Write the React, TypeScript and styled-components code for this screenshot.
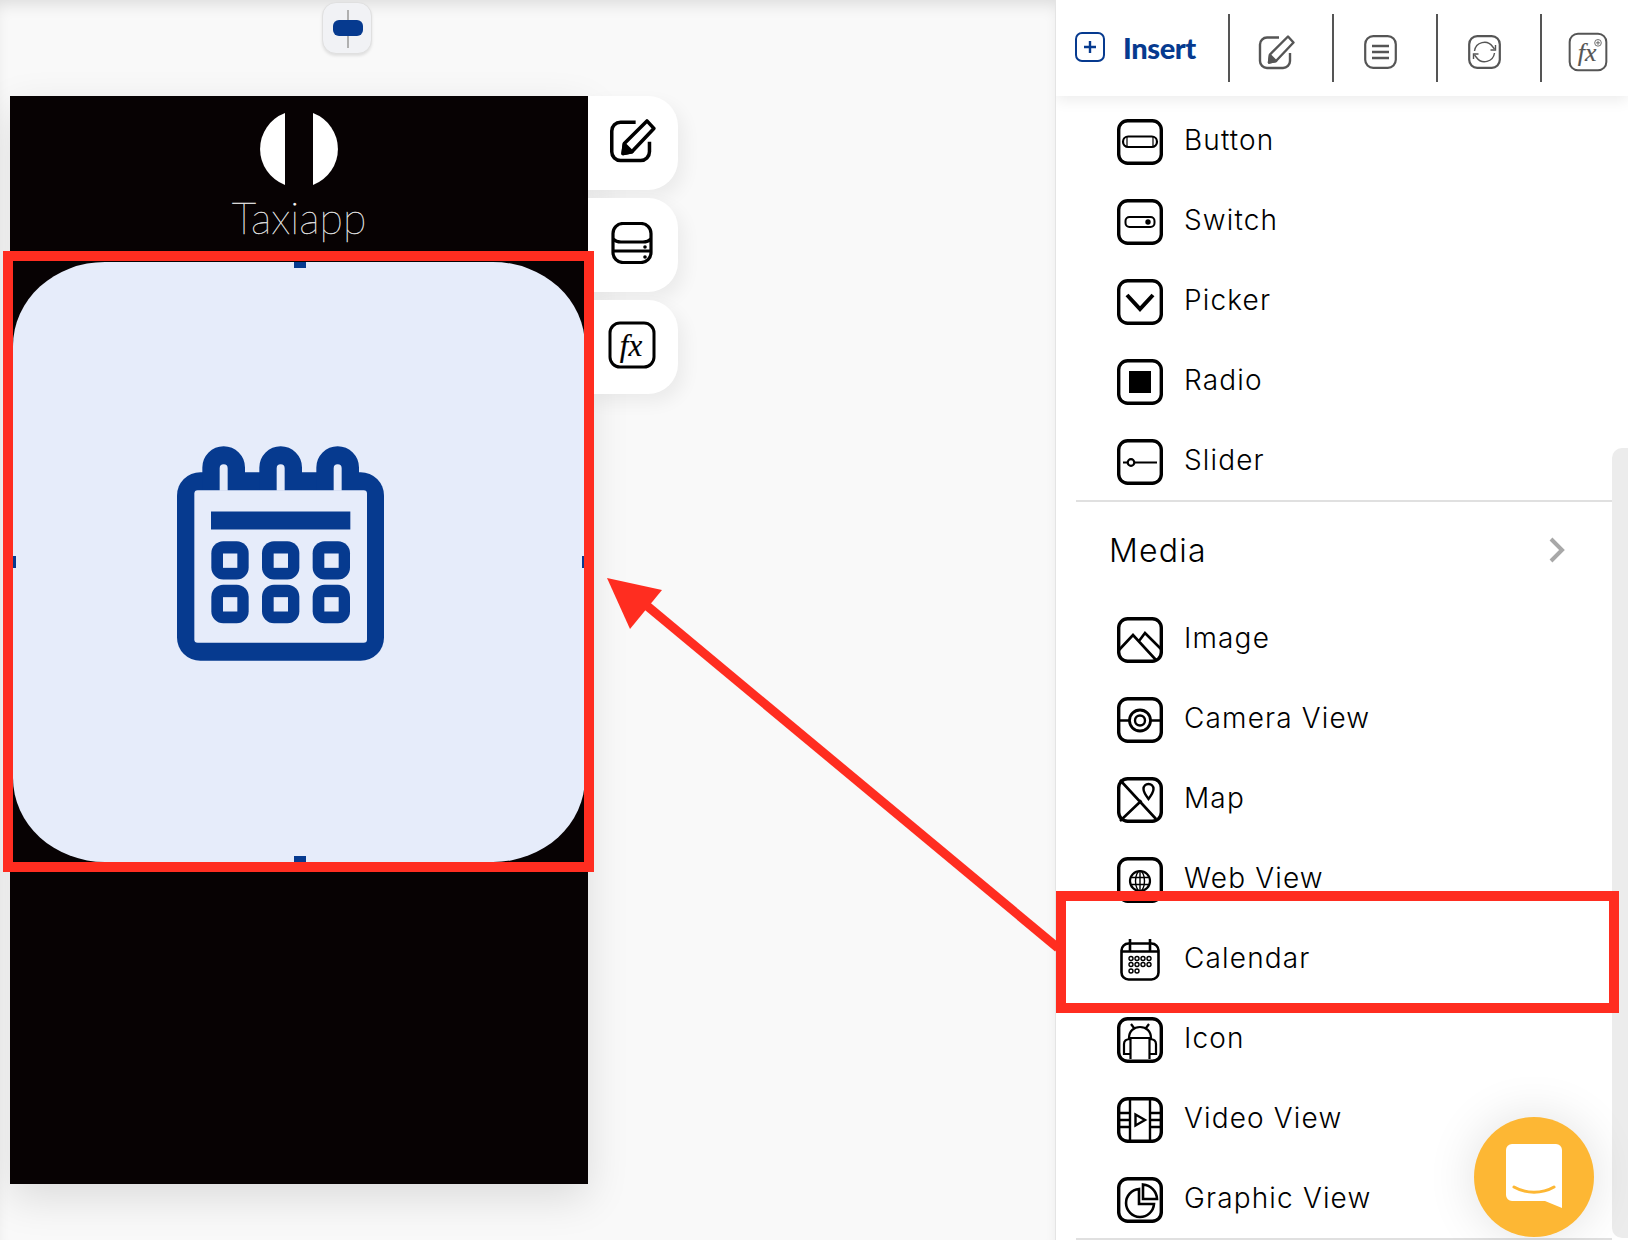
import React from 'react'
import styled, { createGlobalStyle } from 'styled-components'

const BLUE = '#063a8f'
const CARD = '#e6ecfa'
const RED = '#ff2d20'

const Global = createGlobalStyle`
  html, body { margin: 0; padding: 0; background: #f9f9f9; }
  body { font-family: Inter, "Liberation Sans", sans-serif; }
`

const Page = styled.div`
  position: relative;
  width: 1628px;
  height: 1240px;
  overflow: hidden;
  display: flex;
`
const Canvas = styled.div`
  width: 1055px;
  flex: none;
  display: flex;
  flex-direction: column;
  padding: 2px 0 0 10px;
  box-sizing: border-box;
  background: #f9f9f9;
  box-shadow: inset 0 10px 16px -6px rgba(0, 0, 0, 0.12);
`
const AlignBox = styled.div`
  width: 50px;
  height: 52px;
  margin: 0 0 42px 312px;
  box-sizing: border-box;
  position: relative;
  display: flex;
  align-items: center;
  justify-content: center;
  background: #f1f2f5;
  border: 1px solid #e0e0e0;
  border-radius: 14px;
  box-shadow: 0 2px 3px rgba(0, 0, 0, 0.1);
`
const AlignLine = styled.div`
  position: absolute;
  left: 24px;
  top: 7px;
  width: 2px;
  height: 38px;
  background: #b0b0b0;
`
const AlignPill = styled.div`
  position: relative;
  width: 30px;
  height: 16px;
  margin-left: 2px;
  border-radius: 6px;
  background: ${BLUE};
`
const Stage = styled.div`
  display: flex;
  align-items: flex-start;
`
const Phone = styled.div`
  width: 578px;
  height: 1088px;
  flex: none;
  background: #070203;
  box-shadow: 0 14px 40px rgba(0, 0, 0, 0.12);
  display: flex;
  flex-direction: column;
  padding: 17px 3px 0 3px;
  box-sizing: border-box;
`
const Brand = styled.div`
  height: 149px;
  display: flex;
  flex-direction: column;
  align-items: center;
  color: #fff;
  font-family: Lato, sans-serif;
  font-weight: 100;
  font-size: 43px;
  line-height: 50px;
  -webkit-text-stroke: 0.35px #e4e4e4;
`
const BrandName = styled.div`
  margin-top: 8px;
`
const Selected = styled.div`
  position: relative;
  height: 600px;
`
const Card = styled.div`
  height: 100%;
  background: ${CARD};
  border-radius: 92px / 84px;
  display: flex;
  align-items: center;
  justify-content: center;
  padding: 0 38px 18px 0;
  box-sizing: border-box;
`
const Handle = styled.div<{ $side: 'top' | 'bottom' | 'left' | 'right' }>`
  position: absolute;
  background: ${BLUE};
  ${p => (p.$side === 'top' || p.$side === 'bottom'
    ? `width: 12px; height: 6px; left: 281px; ${p.$side}: 0;`
    : `width: 4px; height: 12px; top: 294px; ${p.$side}: -1px;`)}
`
const SideRail = styled.div`
  display: flex;
  flex-direction: column;
  gap: 8px;
`
const SideButton = styled.div`
  width: 90px;
  height: 94px;
  display: flex;
  align-items: center;
  justify-content: center;
  padding: 0 2px 4px 0;
  box-sizing: border-box;
  background: #fff;
  border-radius: 0 30px 30px 0;
  box-shadow: 6px 8px 18px rgba(0, 0, 0, 0.06);
`
const Panel = styled.div`
  position: relative;
  flex: 1;
  background: #fff;
  border-left: 1px solid #e4e4e4;
  overflow: hidden;
`
const Toolbar = styled.div`
  position: relative;
  z-index: 2;
  height: 96px;
  display: flex;
  align-items: center;
  background: #fff;
  box-shadow: 0 4px 14px rgba(0, 0, 0, 0.08);
`
const InsertTab = styled.div`
  width: 172px;
  flex: none;
  display: flex;
  align-items: center;
  gap: 18px;
  padding: 0 0 2px 19px;
  box-sizing: border-box;
  height: 96px;
  color: ${BLUE};
  font-family: Lato, sans-serif;
  font-weight: 900;
  font-size: 29px;
  letter-spacing: -0.4px;
`
const ToolSlot = styled.div`
  width: 104px;
  flex: none;
  height: 68px;
  border-left: 2px solid #555;
  box-sizing: border-box;
  display: flex;
  align-items: center;
  justify-content: center;
  padding: 8px 10px 0 0;
`
const List = styled.div`
  display: flex;
  flex-direction: column;
  padding-top: 6px;
`
const Row = styled.div`
  flex: none;
  height: 80px;
  display: flex;
  align-items: center;
  padding-left: 61px;
`
const IconSlot = styled.div`
  width: 46px;
  height: 46px;
  flex: none;
  display: flex;
  align-items: center;
  justify-content: center;
`
const RowLabel = styled.div`
  margin: -5px 0 0 21px;
  font-size: 28px;
  font-weight: 300;
  line-height: 36px;
  letter-spacing: 1.15px;
  color: #000;
`
const Divider = styled.div<{ $pull: number }>`
  position: relative;
  height: 2px;
  margin: ${p => -p.$pull}px 16px 0 20px;
  background: #e0e0e0;
`
const GroupHead = styled.div`
  flex: none;
  display: flex;
  align-items: center;
  justify-content: space-between;
  padding: 0 63px 2px 53px;
  box-sizing: border-box;
  height: 98px;
  font-size: 32px;
  font-weight: 300;
  letter-spacing: 1.2px;
  color: #000;
`
const ScrollTrack = styled.div`
  position: absolute;
  right: 0;
  top: 448px;
  bottom: 2px;
  width: 16px;
  background: #ececec;
  border-radius: 10px 0 0 10px;
`
const Callout = styled.div`
  position: absolute;
  left: 1056px;
  top: 891px;
  width: 563px;
  height: 122px;
  box-sizing: border-box;
  border: 10px solid ${RED};
`
const SelectBox = styled.div`
  position: absolute;
  left: 3px;
  top: 251px;
  width: 591px;
  height: 621px;
  box-sizing: border-box;
  border: 10px solid ${RED};
`
const ArrowLayer = styled.svg`
  position: absolute;
  left: 0;
  top: 0;
  pointer-events: none;
`
const ChatButton = styled.div`
  position: absolute;
  left: 1474px;
  top: 1117px;
  width: 120px;
  height: 120px;
  border-radius: 50%;
  background: #fdb734;
  box-shadow: 0 0 50px rgba(0, 0, 0, 0.12);
  display: flex;
  align-items: center;
  justify-content: center;
  padding-bottom: 3px;
  box-sizing: border-box;
`

// every list icon sits in the same rounded square
const Frame = ({ children }: { children?: React.ReactNode }) => (
  <svg width="46" height="46" viewBox="0 0 46 46" fill="none" stroke="#000" strokeWidth="1.6">
    <rect x="1.7" y="1.7" width="42.6" height="42.6" rx="9" strokeWidth="3.4" />
    {children}
  </svg>
)

const icons: Record<string, React.ReactNode> = {
  Button: (
    <Frame>
      <rect x="6" y="17.5" width="34" height="10.5" rx="5.2" strokeWidth="2.2" />
      <path d="M10 18v10M36 18v10" strokeWidth="1.2" />
    </Frame>
  ),
  Switch: (
    <Frame>
      <rect x="8.5" y="18" width="29" height="10" rx="4" strokeWidth="2" />
      <circle cx="31" cy="23" r="2.7" fill="#000" stroke="none" />
    </Frame>
  ),
  Picker: (
    <Frame>
      <path d="M10 16l13 14 13-14" strokeWidth="4" />
    </Frame>
  ),
  Radio: (
    <Frame>
      <rect x="12" y="12" width="22" height="22" fill="#000" stroke="none" />
    </Frame>
  ),
  Slider: (
    <Frame>
      <circle cx="14" cy="23.5" r="3.3" strokeWidth="2.2" />
      <path d="M6 23.5h4.5M18 23.5h22" strokeWidth="2.2" />
    </Frame>
  ),
  Image: (
    <Frame>
      <path d="M2 33l14-15 23 25M22 24l6-8 16 16" strokeWidth="2.6" />
    </Frame>
  ),
  'Camera View': (
    <Frame>
      <circle cx="23" cy="23.5" r="10.5" strokeWidth="2.8" />
      <circle cx="23" cy="23.5" r="5" strokeWidth="2.4" />
      <path d="M2 23.5h10M34 23.5h10" strokeWidth="2.4" />
    </Frame>
  ),
  Map: (
    <Frame>
      <path d="M3 3l36 39M24.500 23.500L3 44" strokeWidth="2.6" />
      <path d="M31.500 22c-3-4-5-7-5-10a5 5 0 0 1 10 0c0 3-2 6-5 10z" strokeWidth="2.4" />
    </Frame>
  ),
  'Web View': (
    <Frame>
      <circle cx="23" cy="24" r="10" strokeWidth="2.2" />
      <ellipse cx="23" cy="24" rx="4.5" ry="10" strokeWidth="1.4" />
      <path d="M23 14v20M13.500 20.500h19M13.500 27.500h19" strokeWidth="1.4" />
    </Frame>
  ),
  Calendar: (
    <svg width="40" height="42" viewBox="0 0 40 42" fill="none" stroke="#000" strokeWidth="2.6">
      <rect x="1.500" y="4.500" width="37" height="36" rx="7" />
      <path d="M1.500 12.500h37M10 0v12M30 0v12" />
      {[[11, 19.5], [17, 19.5], [23, 19.5], [29, 19.5], [11, 25.5], [17, 25.5], [23, 25.5], [29, 25.5], [11, 32], [17, 32]].map(([x, y]) => (
        <circle key={`${x}-${y}`} cx={x} cy={y} r="2" strokeWidth="1.4" />
      ))}
    </svg>
  ),
  Icon: (
    <Frame>
      <path d="M12 21c0-7 5-11 11-11s11 4 11 11zM14 7l3 4M32 7l-3 4" strokeWidth="2.2" />
      <path d="M13.500 21v21M32.500 21v21M13.500 22c-4 0-6.500 2-6.500 5v10h6.500M32.500 22c4 0 6.500 2 6.500 5v10h-6.500" strokeWidth="2.2" />
    </Frame>
  ),
  'Video View': (
    <Frame>
      <path d="M13 2v42M33 2v42M2 16h11M2 23h11M2 30h11M33 16h11M33 23h11M33 30h11" strokeWidth="2.4" />
      <path d="M18.500 17.500l9.500 5.500-9.500 5.500z" strokeWidth="2.4" />
    </Frame>
  ),
  'Graphic View': (
    <Frame>
      <path d="M22 12a14 14 0 1 0 15 15H22z" strokeWidth="2.6" />
      <path d="M26 7.500v14.500h14a15 15 0 0 0-14-14.500z" strokeWidth="2.6" />
    </Frame>
  ),
}

const EditGlyph = ({ w, h, color, width }: { w: number; h: number; color: string; width: number }) => (
  <svg width={w} height={h} viewBox="0 0 37 35" fill="none" stroke={color} strokeWidth={width} strokeLinejoin="round">
    <path d="M21 2.500H9a7 7 0 0 0-7 7V26a7 7 0 0 0 7 7h16a7 7 0 0 0 7-7V18" />
    <path d="M30 1.500l5.500 6L18 26l-7 1.500 1-8z" />
    <path d="M12 20l6 6-7 1.500z" fill={color} />
  </svg>
)

const FxGlyph = ({ w, h, color, width, plus }: { w: number; h: number; color: string; width: number; plus?: boolean }) => (
  <svg width={w} height={h} viewBox="0 0 48 48" fill="none" stroke={color} strokeWidth={width}>
    <rect x="2" y="2" width="44" height="44" rx="10" />
    <text x="23" y="35" textAnchor="middle" fontFamily="'Liberation Serif', serif" fontStyle="italic" fontSize="31" fill={color} stroke={color} strokeWidth="0.2">
      fx
    </text>
    {plus && <circle cx="36" cy="13" r="4" strokeWidth="1" />}
    {plus && <path d="M36 10.500v5M33.500 13h5" strokeWidth="1" />}
  </svg>
)

const controls = ['Button', 'Switch', 'Picker', 'Radio', 'Slider']
const media = ['Image', 'Camera View', 'Map', 'Web View', 'Calendar', 'Icon', 'Video View', 'Graphic View']

const ItemRow = ({ name }: { name: string }) => (
  <Row>
    <IconSlot>{icons[name]}</IconSlot>
    <RowLabel>{name}</RowLabel>
  </Row>
)

export default function App() {
  return (
    <Page>
      <Global />
      <Canvas>
        <AlignBox>
          <AlignLine />
          <AlignPill />
        </AlignBox>
        <Stage>
          <Phone>
            <Brand>
              <svg width="78" height="72" viewBox="0 0 78 72" fill="#fff">
                <path d="M25 0A39 38.600 0 0 0 25 72z" />
                <path d="M53 0A39 38.600 0 0 1 53 72z" />
              </svg>
              <BrandName>Taxiapp</BrandName>
            </Brand>
            <Selected>
              <Card>
                <svg width="207" height="215" viewBox="82 78 621 644">
                  <rect x="82" y="156" width="621" height="566" rx="70" fill={BLUE} />
                  <path d="M158 210v-68a64 64 0 0 1 128 0v68zM329 210v-68a64 64 0 0 1 128 0v68zM500 210v-68a64 64 0 0 1 128 0v68z" fill={BLUE} />
                  <rect x="134" y="210" width="518" height="458" rx="10" fill={CARD} />
                  <path d="M210 212v-68a12 12 0 0 1 24 0v68zM381 212v-68a12 12 0 0 1 24 0v68zM552 212v-68a12 12 0 0 1 24 0v68z" fill={CARD} />
                  <rect x="184" y="274" width="418" height="54" fill={BLUE} />
                  {[185, 337, 489].map(x =>
                    [363, 494].map(y => (
                      <g key={`${x}-${y}`}>
                        <rect x={x} y={y} width="112" height="115" rx="36" fill={BLUE} />
                        <rect x={x + 35} y={y + 37} width="43" height="43" fill={CARD} />
                      </g>
                    ))
                  )}
                </svg>
              </Card>
              <Handle $side="top" />
              <Handle $side="bottom" />
              <Handle $side="left" />
              <Handle $side="right" />
            </Selected>
          </Phone>
          <SideRail>
            <SideButton>
              <EditGlyph w={47} h={44} color="#000" width={2.8} />
            </SideButton>
            <SideButton>
              <svg width="42" height="42" viewBox="0 0 42 42" fill="none" stroke="#000" strokeWidth="3.2">
                <rect x="2" y="1.500" width="38" height="39" rx="10" />
                <path d="M2 17c2 2 5 3 8 3h22c3 0 6-1 8-3M2 29h38" />
                <circle cx="34" cy="25" r="1.800" fill="#000" stroke="none" />
                <circle cx="34" cy="35" r="1.800" fill="#000" stroke="none" />
              </svg>
            </SideButton>
            <SideButton>
              <FxGlyph w={48} h={48} color="#000" width={3} />
            </SideButton>
          </SideRail>
        </Stage>
      </Canvas>
      <Panel>
        <Toolbar>
          <InsertTab>
            <svg width="30" height="30" viewBox="0 0 30 30" fill="none" stroke={BLUE} strokeWidth="2">
              <rect x="1" y="1" width="28" height="28" rx="6" />
              <path d="M15 9v12M9 15h12" strokeWidth="2.400" />
            </svg>
            Insert
          </InsertTab>
          <ToolSlot>
            <EditGlyph w={37} h={35} color="#555" width={2.4} />
          </ToolSlot>
          <ToolSlot>
            <svg width="33" height="34" viewBox="0 0 33 34" fill="none" stroke="#555" strokeWidth="2.200">
              <rect x="1.200" y="1.200" width="30.600" height="31.600" rx="8" />
              <path d="M8 11h17M8 17h17M8 23h17" strokeWidth="2.600" />
            </svg>
          </ToolSlot>
          <ToolSlot>
            <svg width="33" height="34" viewBox="0 0 33 34" fill="none" stroke="#555" strokeWidth="2.200">
              <rect x="1.200" y="1.200" width="30.600" height="31.600" rx="8" />
              <path d="M6.500 16a10 10 0 0 1 18-4.500l2 2.500M26.500 18a10 10 0 0 1-18 4.500l-2-2.500" strokeWidth="1.400" />
              <path d="M27.500 10v5h-5M5.500 24v-5h5" strokeWidth="1.400" />
            </svg>
          </ToolSlot>
          <ToolSlot>
            <FxGlyph w={40} h={40} color="#555" width={2.400} plus />
          </ToolSlot>
        </Toolbar>
        <List>
          {controls.map(name => <ItemRow key={name} name={name} />)}
          <Divider $pull={2} />
          <GroupHead>
            Media
            <svg width="16" height="26" viewBox="0 0 16 26" fill="none" stroke="#a8a8a8" strokeWidth="4">
              <path d="M2 2l11 11L2 24" />
            </svg>
          </GroupHead>
          {media.map(name => <ItemRow key={name} name={name} />)}
          <Divider $pull={2} />
        </List>
        <ScrollTrack />
      </Panel>
      <SelectBox />
      <Callout />
      <ArrowLayer width="1628" height="1240" viewBox="0 0 1628 1240">
        <path d="M1058 948L640 600" stroke={RED} strokeWidth="9" fill="none" />
        <path d="M607 578l55 12-32 39z" fill={RED} />
      </ArrowLayer>
      <ChatButton>
        <svg width="56" height="64" viewBox="0 0 56 64">
          <path d="M6 0h44a6 6 0 0 1 6 6v58l-17-7H6a6 6 0 0 1-6-6V6a6 6 0 0 1 6-6z" fill="#fff" />
          <path d="M8 43c12 7 28 7 40 0" fill="none" stroke="#fdb734" strokeWidth="3" strokeLinecap="round" />
        </svg>
      </ChatButton>
    </Page>
  )
}
